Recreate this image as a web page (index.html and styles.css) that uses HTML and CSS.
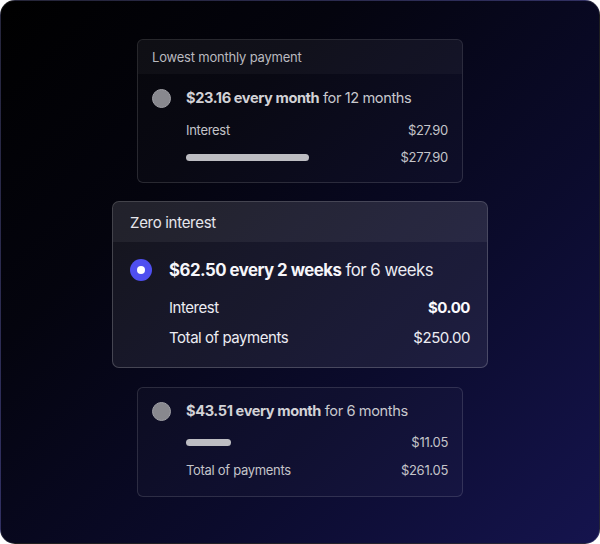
FILE: index.html
```html
<!DOCTYPE html>
<html>
<head>
<meta charset="utf-8">
<link rel="stylesheet" href="styles.css">
</head>
<body>
<div class="frame">
  <div class="card card-dim">
    <div class="card-head">Lowest monthly payment</div>
    <div class="card-body">
      <div class="title-row">
        <span class="radio"></span>
        <span class="title"><b>$23.16 every month</b> for 12 months</span>
      </div>
      <div class="rows">
        <div class="row"><span>Interest</span><span>$27.90</span></div>
        <div class="row"><span class="bar bar-long"></span><span>$277.90</span></div>
      </div>
    </div>
  </div>

  <div class="card card-active">
    <div class="card-head">Zero interest</div>
    <div class="card-body">
      <div class="title-row">
        <span class="radio radio-on"></span>
        <span class="title"><b>$62.50 every 2 weeks</b> for 6 weeks</span>
      </div>
      <div class="rows">
        <div class="row"><span>Interest</span><b>$0.00</b></div>
        <div class="row"><span>Total of payments</span><span>$250.00</span></div>
      </div>
    </div>
  </div>

  <div class="card card-dim card-last">
    <div class="card-body">
      <div class="title-row">
        <span class="radio"></span>
        <span class="title"><b>$43.51 every month</b> for 6 months</span>
      </div>
      <div class="rows">
        <div class="row"><span class="bar bar-short"></span><span>$11.05</span></div>
        <div class="row"><span>Total of payments</span><span>$261.05</span></div>
      </div>
    </div>
  </div>
</div>
</body>
</html>
```

FILE: styles.css
```css
html, body {
  margin: 0;
  padding: 0;
  background: #ffffff;
}
body {
  font-family: Inter, "Noto Sans", sans-serif;
  -webkit-font-smoothing: antialiased;
}
.frame {
  box-sizing: border-box;
  width: 600px;
  height: 544px;
  border-radius: 15px;
  border: 1px solid rgba(255, 255, 255, 0.12);
  background: linear-gradient(135deg, #000000 0%, #04040e 30%, #0b0b2c 65%, #15144e 100%);
  display: flex;
  flex-direction: column;
  align-items: center;
  padding-top: 38px;
  overflow: hidden;
}
.card {
  box-sizing: border-box;
  border-radius: 6px;
  border: 1px solid rgba(255, 255, 255, 0.13);
  background: rgba(255, 255, 255, 0.025);
  overflow: hidden;
}
.card-dim {
  width: 326px;
  color: #c4c4c9;
}
.card-head {
  font-weight: 400;
}
.card-dim .card-head {
  height: 34px;
  line-height: 35px;
  padding-left: 14px;
  font-size: 13px;
  letter-spacing: -0.2px;
  color: #b9b9bf;
  background: rgba(255, 255, 255, 0.035);
}
.card-dim .card-body {
  padding: 14px 14px 15px 14px;
}
.card-last {
  margin-top: 19px;
}
.card-last .card-body {
  padding: 13px 14px 16px 14px;
}
.title-row {
  display: flex;
  align-items: center;
}
.radio {
  box-sizing: border-box;
  flex: none;
  width: 19px;
  height: 19px;
  border-radius: 50%;
  background: #88888e;
  border: 1px solid #a0a0a6;
}
.card-dim .title {
  margin-left: 15px;
  font-size: 14.6px;
  line-height: 20px;
  letter-spacing: -0.4px;
  color: #c8c8cd;
}
.card-dim .title b {
  font-weight: 700;
  color: #d2d2d6;
}
.rows {
  display: flex;
  flex-direction: column;
}
.card-dim .rows {
  margin-left: 34px;
  margin-top: 12px;
  gap: 7px;
  font-size: 13px;
  letter-spacing: -0.3px;
}
.card-last .rows {
  margin-top: 11px;
  gap: 8px;
}
.row {
  display: flex;
  justify-content: space-between;
  align-items: center;
}
.card-dim .row {
  line-height: 20px;
}
.bar {
  display: block;
  height: 7px;
  border-radius: 4px;
  background: #bdbdc2;
}
.bar-long { width: 123px; }
.bar-short { width: 45px; }

.card-active {
  width: 376px;
  margin-top: 18px;
  border-radius: 7px;
  border-color: rgba(255, 255, 255, 0.2);
  background: rgba(255, 255, 255, 0.07);
  color: #ececf2;
}
.card-active .card-head {
  height: 40px;
  line-height: 41px;
  padding-left: 17px;
  font-size: 15px;
  letter-spacing: -0.3px;
  color: #e6e6ec;
  background: rgba(255, 255, 255, 0.06);
}
.card-active .card-body {
  padding: 17px 17px 18px 17px;
}
.radio-on {
  width: 22px;
  height: 22px;
  border: none;
  background: #4f4ff0;
  position: relative;
}
.radio-on::after {
  content: "";
  position: absolute;
  left: 7px;
  top: 7px;
  width: 8px;
  height: 8px;
  border-radius: 50%;
  background: #ffffff;
}
.card-active .title {
  margin-left: 17px;
  font-size: 16.8px;
  line-height: 22px;
  letter-spacing: -0.5px;
  color: #ececf2;
}
.card-active .title b {
  font-weight: 700;
  color: #f6f6fa;
}
.card-active .rows {
  margin-left: 39px;
  margin-top: 16px;
  gap: 8px;
  font-size: 15px;
  letter-spacing: -0.45px;
}
.card-active .row {
  line-height: 22px;
}
.card-active .row b {
  font-weight: 700;
  color: #fafafd;
}
```
